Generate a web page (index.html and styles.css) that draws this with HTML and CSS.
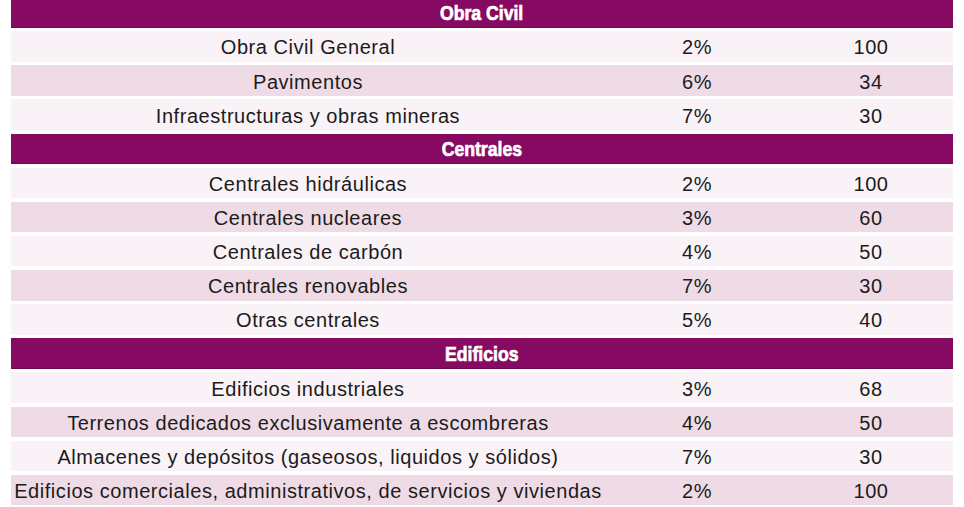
FILE: index.html
```html
<!DOCTYPE html>
<html lang="es">
<head>
<meta charset="utf-8">
<title>Tabla</title>
<link rel="stylesheet" href="styles.css">
</head>
<body>
<div class="table">
  <div class="row head"><div class="title"><span>Obra Civil</span></div></div>
  <div class="row light"><div>Obra Civil General</div><div>2%</div><div>100</div></div>
  <div class="row dark"><div>Pavimentos</div><div>6%</div><div>34</div></div>
  <div class="row light"><div>Infraestructuras y obras mineras</div><div>7%</div><div>30</div></div>
  <div class="row head"><div class="title"><span>Centrales</span></div></div>
  <div class="row light"><div>Centrales hidráulicas</div><div>2%</div><div>100</div></div>
  <div class="row dark"><div>Centrales nucleares</div><div>3%</div><div>60</div></div>
  <div class="row light"><div>Centrales de carbón</div><div>4%</div><div>50</div></div>
  <div class="row dark"><div>Centrales renovables</div><div>7%</div><div>30</div></div>
  <div class="row light"><div>Otras centrales</div><div>5%</div><div>40</div></div>
  <div class="row head"><div class="title"><span>Edificios</span></div></div>
  <div class="row light"><div>Edificios industriales</div><div>3%</div><div>68</div></div>
  <div class="row dark"><div>Terrenos dedicados exclusivamente a escombreras</div><div>4%</div><div>50</div></div>
  <div class="row light"><div>Almacenes y depósitos (gaseosos, liquidos y sólidos)</div><div>7%</div><div>30</div></div>
  <div class="row dark"><div>Edificios comerciales, administrativos, de servicios y viviendas</div><div>2%</div><div>100</div></div>
</div>
</body>
</html>
```
FILE: styles.css
```css
html, body {
  margin: 0;
  padding: 0;
  background: #ffffff;
  overflow: hidden;
}
body {
  font-family: "Liberation Sans", Arial, sans-serif;
  color: #1b1b1b;
}
.table {
  display: flex;
  flex-direction: column;
  gap: 3.64px;
  width: 942px;
  margin: -3px 0 0 11px;
}
.row {
  box-sizing: border-box;
  display: grid;
  grid-template-columns: 594px 184px 164px;
  align-items: center;
  height: 30.5px;
  padding-top: 3px;
  text-align: center;
  font-size: 20px;
  letter-spacing: 0.55px;
  white-space: nowrap;
}
.row.light { background: #f9f2f6; }
.row.dark { background: #efdbe6; }
.row.head {
  background: #860a61;
  box-shadow: inset 0 -1px 0 #6e0750;
  padding-top: 1px;
}
.title {
  grid-column: 1 / 4;
  color: #ffffff;
  font-weight: bold;
  font-size: 21px;
  letter-spacing: 0;
}
.title span {
  display: inline-block;
  transform: scaleX(0.84);
  -webkit-text-stroke: 0.7px #ffffff;
}
```
